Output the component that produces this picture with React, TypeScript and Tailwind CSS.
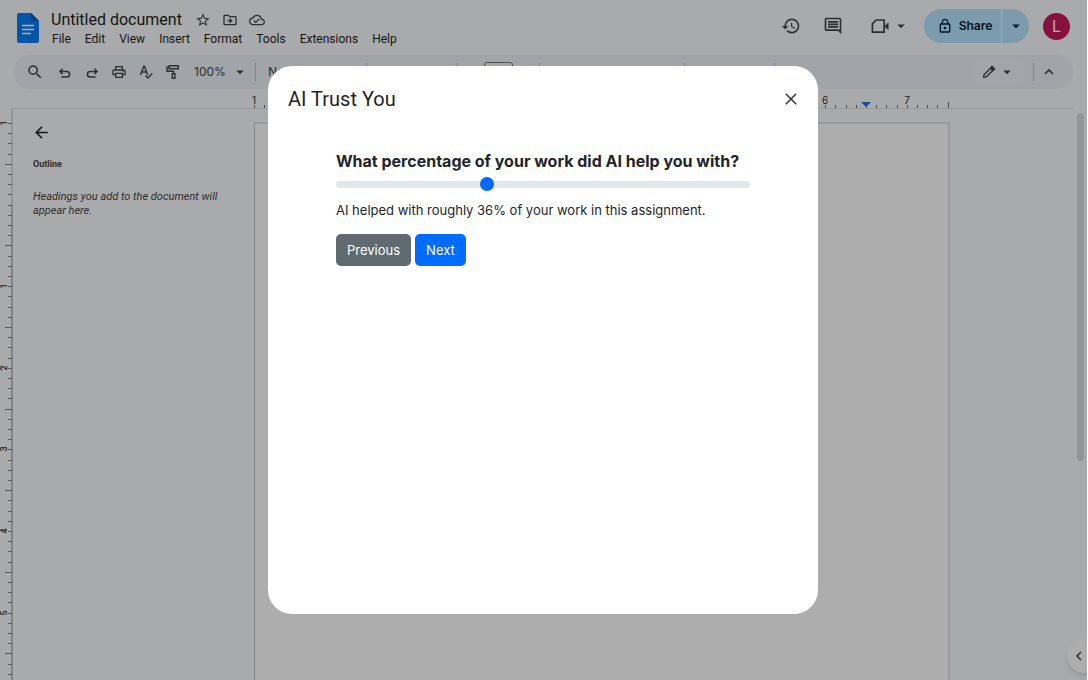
import { useState } from "react"
import {
  MdArrowBack,
  MdArrowDropDown,
  MdClose,
  MdFormatBold,
  MdFormatColorText,
  MdFormatItalic,
  MdFormatUnderlined,
  MdHistory,
  MdInsertLink,
  MdOutlineCloudDone,
  MdOutlineComment,
  MdOutlineDriveFileMove,
  MdOutlineImage,
  MdOutlineLock,
  MdOutlinePrint,
  MdSearch,
  MdStarBorder,
} from "react-icons/md"

const menus = ["File", "Edit", "View", "Insert", "Format", "Tools", "Extensions", "Help"]

// One inch on the rulers, in pixels, with a tick at every eighth
const INCH = 81.6

function DocsLogo() {
  return (
    <svg width="24" height="32" viewBox="0 0 24 32" aria-hidden="true">
      <path d="M3 1h12l8 8v20a2 2 0 0 1-2 2H3a2 2 0 0 1-2-2V3a2 2 0 0 1 2-2z" fill="#0a7cf5" />
      <path d="M15 1l8 8h-6a2 2 0 0 1-2-2z" fill="#0b57b8" />
      <path d="M6 13.5h12M6 17.5h12M6 21.5h9" stroke="#fff" strokeWidth="1.6" />
    </svg>
  )
}

function UndoIcon({ className = "" }) {
  return (
    <svg width="16" height="16" viewBox="0 0 16 16" fill="none" stroke="currentColor" strokeWidth="1.5" className={className} aria-hidden="true">
      <path d="M5.6 4.8L3 7.4 5.6 10M3 7.4h6.8a2.8 2.8 0 0 1 0 5.6H4.4" />
    </svg>
  )
}

function SpellcheckIcon() {
  return (
    <svg width="16" height="16" viewBox="0 0 16 16" fill="none" stroke="currentColor" strokeWidth="1.4" aria-hidden="true">
      <path d="M2.5 11L5.8 2.2h.6L9.7 11M3.6 8h5M7.5 11.5l2.4 2.5 4.3-4.6" />
    </svg>
  )
}

function PaintIcon() {
  return (
    <svg width="16" height="16" viewBox="0 0 16 16" fill="none" stroke="currentColor" strokeWidth="1.4" aria-hidden="true">
      <path d="M4.2 1.7h9.1v3H4.2zM4.2 3.2H2v4.1h6.5v2.4M7.2 9.7h2.7v4.6H7.2z" />
    </svg>
  )
}

function VideoIcon() {
  return (
    <svg width="20" height="20" viewBox="0 0 20 20" fill="none" stroke="currentColor" strokeWidth="1.7" aria-hidden="true">
      <path d="M6 4h8.2v12.2H2.4V7.8z" strokeLinejoin="round" />
      <path d="M14.5 10.2l4-4v8z" fill="currentColor" stroke="none" />
    </svg>
  )
}

function PencilIcon() {
  return (
    <svg width="16" height="16" viewBox="0 0 16 16" fill="none" stroke="currentColor" strokeWidth="1.4" aria-hidden="true">
      <path d="M2.6 13.4l.5-2.7 7.9-7.9 2.2 2.2-7.9 7.9z" strokeLinejoin="round" />
      <path d="M9.5 4.2l2.3 2.3 1.6-1.6-2.3-2.3z" fill="currentColor" />
    </svg>
  )
}

function Chevron({ className = "" }) {
  return (
    <svg width="12" height="12" viewBox="0 0 12 12" fill="none" stroke="currentColor" strokeWidth="1.6" className={className} aria-hidden="true">
      <path d="M2 8l4-4 4 4" />
    </svg>
  )
}

function Divider() {
  return <span className="h-[18px] w-px shrink-0 bg-[#c7c7c7]" />
}

function HorizontalRuler() {
  const ticks = Array.from({ length: 68 }, (_, n) => n)
  return (
    <svg className="h-5 w-[695px] shrink-0 overflow-visible" aria-hidden="true">
      {ticks.map((n) => (
        <path key={n} d={`M${Math.round((n * INCH) / 8) + 0.5} 16v3`} stroke="#707376" />
      ))}
      <path d="M694.5 13v6" stroke="#707376" />
      {[0, 2, 3, 4, 5, 6, 7, 8].map((i) => (
        <text key={i} x={Math.round(i * INCH)} y="15" textAnchor="middle" className="fill-[#303134] text-[10px]">
          {Math.abs(i - 1)}
        </text>
      ))}
      <path d="M607 13h10l-5 5z" fill="#1a73e8" />
    </svg>
  )
}

function VerticalRuler() {
  const ticks = Array.from({ length: 88 }, (_, n) => n)
  return (
    <div className="w-[13px] shrink-0 overflow-hidden">
      <svg width="13" height="920" aria-hidden="true">
        <path d="M12 0v95" stroke="#dadce0" strokeWidth="2" />
        <path d="M12 95v825" stroke="#bdc1c6" strokeWidth="2" />
        {ticks.map((n) => (
          <path
            key={n}
            d={`M${n % 8 === 4 ? 5 : 8} ${Math.round(14 + (n * INCH) / 8) + 0.5}H12`}
            stroke="#808386"
          />
        ))}
        {[0, 2, 3, 4, 5, 6].map((i) => {
          const y = Math.round(14 + i * INCH)
          return (
            <text
              key={i}
              x="7"
              y={y}
              transform={`rotate(-90 7 ${y})`}
              textAnchor="middle"
              className="fill-[#303134] font-['Roboto',sans-serif] text-[9px] font-medium"
            >
              {Math.abs(i - 1)}
            </text>
          )
        })}
      </svg>
    </div>
  )
}

function Header() {
  return (
    <header className="flex h-[55px] shrink-0 items-start pl-4 text-[#444746]">
      <a href="#docs" aria-label="Docs home" className="mt-3">
        <DocsLogo />
      </a>
      <div className="ml-[11px] mt-[9px] font-['Roboto',sans-serif]">
        <div className="flex h-[21px] items-center">
          <h1 className="text-base text-[#1f1f1f]">Untitled document</h1>
          <div className="ml-[13px] flex items-center gap-[11px]">
            <button aria-label="Star"><MdStarBorder size={16} /></button>
            <button aria-label="Move"><MdOutlineDriveFileMove size={16} /></button>
            <button aria-label="Saved to Drive"><MdOutlineCloudDone size={16} /></button>
          </div>
        </div>
        <nav className="flex h-[18px] items-center gap-[14px] pl-px text-xs text-[#1f1f1f]">
          {menus.map((menu) => (
            <button key={menu}>{menu}</button>
          ))}
        </nav>
      </div>

      <div className="ml-auto flex h-[34px] items-center mt-[9px] mr-[17px]">
        <button aria-label="Version history" className="mr-[22px]"><MdHistory size={20} /></button>
        <button aria-label="Comments" className="mr-[27px]"><MdOutlineComment size={20} /></button>
        <button aria-label="Video call" className="mr-3.5 flex items-center">
          <VideoIcon />
          <MdArrowDropDown size={18} className="ml-0.5" />
        </button>
        <div className="flex h-[34px] gap-px">
          <button className="flex w-[77px] items-center justify-center gap-1.5 rounded-l-full bg-[#b7e6ff] pl-1 text-xs font-semibold text-[#001d35]">
            <MdOutlineLock size={16} />
            Share
          </button>
          <button aria-label="Share options" className="flex w-[27px] items-center justify-center rounded-r-full bg-[#b7e6ff] text-[#001d35]">
            <MdArrowDropDown size={18} />
          </button>
        </div>
        <button aria-label="Account" className="ml-3.5 size-[27px] rounded-full bg-[#c8185a] text-base text-white">
          L
        </button>
      </div>
    </header>
  )
}

function Toolbar() {
  return (
    <div className="ml-[13px] mr-3.5 flex h-[34px] shrink-0 items-center rounded-full bg-[#edf2fa] pl-[6px] pr-[18px] text-xs text-[#444746]">
      <button aria-label="Search the menus" className="flex w-8 justify-center"><MdSearch size={18} /></button>
      <button aria-label="Undo" className="flex w-[27px] justify-center"><UndoIcon /></button>
      <button aria-label="Redo" className="flex w-[27px] justify-center"><UndoIcon className="-scale-x-100" /></button>
      <button aria-label="Print" className="flex w-[27px] justify-center"><MdOutlinePrint size={16} /></button>
      <button aria-label="Spelling" className="flex w-[27px] justify-center"><SpellcheckIcon /></button>
      <button aria-label="Paint format" className="flex w-[27px] justify-center"><PaintIcon /></button>
      <button aria-label="Zoom" className="flex w-[69px] items-center justify-between pl-2 pr-1.5">
        100%
        <MdArrowDropDown size={18} />
      </button>
      <Divider />
      <button className="flex w-[110px] items-center justify-between pl-3 pr-1">
        Normal text
        <MdArrowDropDown size={18} />
      </button>
      <Divider />
      <button className="flex w-[90px] items-center justify-between pl-3 pr-1">
        Arial
        <MdArrowDropDown size={18} />
      </button>
      <Divider />
      <div className="flex w-[81px] items-center justify-center gap-2">
        <button aria-label="Decrease font size">−</button>
        <input aria-label="Font size" defaultValue="11" className="h-[21px] w-[29px] rounded-[3px] border border-[#747775] text-center" />
        <button aria-label="Increase font size">+</button>
      </div>
      <Divider />
      <div className="flex w-36 items-center justify-around">
        <button aria-label="Bold"><MdFormatBold size={16} /></button>
        <button aria-label="Italic"><MdFormatItalic size={16} /></button>
        <button aria-label="Underline"><MdFormatUnderlined size={16} /></button>
        <button aria-label="Text color"><MdFormatColorText size={16} /></button>
      </div>
      <Divider />
      <div className="flex w-[89px] items-center justify-around">
        <button aria-label="Insert link"><MdInsertLink size={16} /></button>
        <button aria-label="Insert image"><MdOutlineImage size={16} /></button>
      </div>
      <Divider />
      <button aria-label="Editing mode" className="ml-auto flex h-[26px] w-[55px] items-center justify-center gap-px rounded-full bg-[#f0f4fb] pl-0.5">
        <PencilIcon />
        <MdArrowDropDown size={18} />
      </button>
      <span className="ml-2 flex"><Divider /></span>
      <button aria-label="Hide the menus" className="ml-[9px]"><Chevron /></button>
    </div>
  )
}

function Outline() {
  return (
    <aside className="w-[241px] shrink-0 px-5 font-['Roboto',sans-serif] text-[#444746]">
      <button aria-label="Close outline" className="-ml-px mt-3.5 block text-[#1f1f1f]"><MdArrowBack size={19} /></button>
      <h2 className="mt-4 text-[9px] leading-3 font-bold">Outline</h2>
      <p className="mt-5 text-[11px] leading-[14px] italic">
        Headings you add to the document will appear here.
      </p>
    </aside>
  )
}

function SurveyDialog() {
  const [percent, setPercent] = useState(36)
  return (
    <div role="dialog" aria-labelledby="dialog-title" className="h-[548px] w-[550px] rounded-3xl bg-white">
      <div className="flex h-[66px] items-center justify-between pl-5 pr-[17px]">
        <h2 id="dialog-title" className="font-['Roboto',sans-serif] text-xl text-[#1f1f1f]">AI Trust You</h2>
        <button aria-label="Close" className="text-[#444746]"><MdClose size={20} /></button>
      </div>
      <form className="px-[68px] pt-[17px] text-[#212529]" onSubmit={(e) => e.preventDefault()}>
        <label htmlFor="percent" className="block text-base leading-6 font-bold">
          What percentage of your work did AI help you with?
        </label>
        <input
          id="percent"
          type="range"
          min="0"
          max="100"
          value={percent}
          onChange={(e) => setPercent(Number(e.target.value))}
          className="mt-1 block h-[14px] w-full appearance-none bg-transparent [&::-webkit-slider-runnable-track]:h-[7px] [&::-webkit-slider-runnable-track]:rounded-full [&::-webkit-slider-runnable-track]:bg-[#e3e7eb] [&::-webkit-slider-thumb]:-mt-1 [&::-webkit-slider-thumb]:size-[14px] [&::-webkit-slider-thumb]:appearance-none [&::-webkit-slider-thumb]:rounded-full [&::-webkit-slider-thumb]:bg-[#0069fc]"
        />
        <p className="mt-2 text-[13px] leading-[22px]">
          AI helped with roughly {percent}% of your work in this assignment.
        </p>
        <div className="mt-[13px] flex gap-1 text-[13px] text-white">
          <button type="button" className="h-8 rounded-[5px] bg-[#5f6b70] px-[11px] pt-px">Previous</button>
          <button type="submit" className="h-8 rounded-[5px] bg-[#006bff] px-[11px] pt-px">Next</button>
        </div>
      </form>
    </div>
  )
}

export default function App() {
  return (
    <div className="h-screen bg-white pr-px font-['Inter',sans-serif]">
      <div className="relative flex h-full flex-col overflow-hidden bg-[#f9fbfd]">
        <Header />
        <Toolbar />
        <div className="ml-3 mr-3.5 flex h-5 shrink-0 border-b border-[#e1e3e6] pl-[242px]">
          <HorizontalRuler />
        </div>
        <main className="flex min-h-0 flex-1">
          <VerticalRuler />
          <Outline />
          <div className="flex min-w-0 flex-1 justify-between pt-[13px]">
            <div className="w-[696px] shrink-0 border-2 border-b-0 border-l border-[#e3e4e6] border-l-[#c4c7c9] bg-white" />
            <div className="-mt-[9px] mr-[3px] h-[348px] w-[7px] rounded-full bg-[#dadce0]" />
          </div>
        </main>
        <button
          aria-label="Show side panel"
          className="absolute -right-3.5 bottom-[7px] flex size-[34px] items-center rounded-full bg-white pl-1.5 text-[#444746] shadow-md"
        >
          <Chevron className="-rotate-90" />
        </button>

        {/* Dialog over the dimmed editor */}
        <div className="absolute inset-0 flex items-center justify-center bg-black/32 pr-px">
          <SurveyDialog />
        </div>
      </div>
    </div>
  )
}
